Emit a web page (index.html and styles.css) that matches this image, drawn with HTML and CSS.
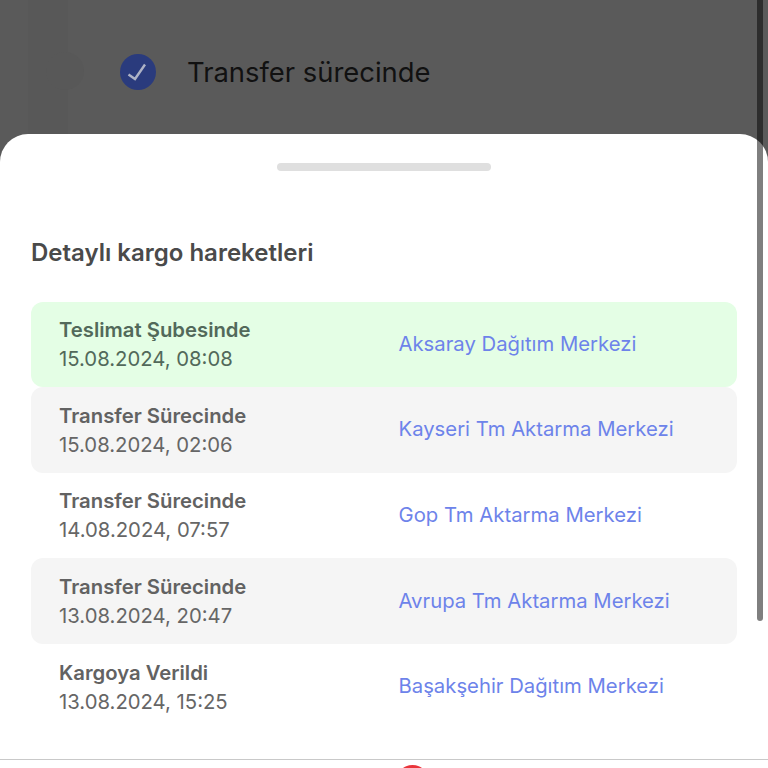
FILE: index.html
```html
<!DOCTYPE html>
<html lang="tr">
<head>
    <meta charset="UTF-8">
    <meta name="viewport" content="width=device-width, initial-scale=1.0">
    <title>Detaylı kargo hareketleri</title>
    <link rel="stylesheet" href="styles.css">
</head>
<body>
    <div class="screen">
        <!-- Karartılmış arka plan -->
        <div class="backdrop">
            <div class="track"></div>
            <div class="track-dot"></div>
            <div class="status-row">
                <svg class="check" width="36" height="36" viewBox="0 0 36 36">
                    <circle cx="18" cy="18" r="18" fill="#2a3b7d"/>
                    <path d="M8.5 20.5l6.5 4.5 10-14.5" fill="none" stroke="#aeb3c6" stroke-width="2.4"/>
                </svg>
                <span class="status-text">Transfer sürecinde</span>
            </div>
        </div>

        <!-- Alt sayfa -->
        <div class="sheet">
            <div class="handle"></div>
            <h2 class="sheet-title">Detaylı kargo hareketleri</h2>
            <div class="moves">
                <div class="move move-current">
                    <div class="move-info">
                        <div class="move-status">Teslimat Şubesinde</div>
                        <div class="move-date">15.08.2024, 08:08</div>
                    </div>
                    <div class="move-place">Aksaray Dağıtım Merkezi</div>
                </div>
                <div class="move move-odd">
                    <div class="move-info">
                        <div class="move-status">Transfer Sürecinde</div>
                        <div class="move-date">15.08.2024, 02:06</div>
                    </div>
                    <div class="move-place">Kayseri Tm Aktarma Merkezi</div>
                </div>
                <div class="move">
                    <div class="move-info">
                        <div class="move-status">Transfer Sürecinde</div>
                        <div class="move-date">14.08.2024, 07:57</div>
                    </div>
                    <div class="move-place">Gop Tm Aktarma Merkezi</div>
                </div>
                <div class="move move-odd">
                    <div class="move-info">
                        <div class="move-status">Transfer Sürecinde</div>
                        <div class="move-date">13.08.2024, 20:47</div>
                    </div>
                    <div class="move-place">Avrupa Tm Aktarma Merkezi</div>
                </div>
                <div class="move">
                    <div class="move-info">
                        <div class="move-status">Kargoya Verildi</div>
                        <div class="move-date">13.08.2024, 15:25</div>
                    </div>
                    <div class="move-place">Başakşehir Dağıtım Merkezi</div>
                </div>
            </div>
        </div>

        <!-- Alt menü, sadece üst kenarı görünüyor -->
        <div class="bottom-bar">
            <div class="red-dot"></div>
        </div>

        <div class="scrollbar"></div>
    </div>
</body>
</html>
```

FILE: styles.css
```css
/* Основные стили */
html, body {
    margin: 0;
    height: 100%;
}
body {
    font-family: Inter, "Noto Sans", sans-serif;
    background-color: #fff;
    overflow: hidden;
}
.screen {
    position: relative;
    height: 768px;
    display: flex;
    flex-direction: column;
    overflow: hidden;
    background-color: #5a5a5a;
}

/* Arka plan */
.backdrop {
    position: relative;
    height: 164px;
    margin-bottom: -30px;
    flex-shrink: 0;
}
.track {
    position: absolute;
    top: 0;
    left: 28px;
    width: 40px;
    height: 140px;
    background-color: #585858;
}
.track-dot {
    position: absolute;
    top: 52px;
    left: 46px;
    width: 38px;
    height: 38px;
    border-radius: 50%;
    background-color: #585858;
}
.status-row {
    position: relative;
    display: flex;
    align-items: center;
    gap: 31px;
    padding: 54px 0 0 120px;
}
.check {
    display: block;
}
.status-text {
    font-size: 27.4px;
    line-height: 36px;
    color: #111;
}

/* Alt sayfa */
.sheet {
    position: relative;
    flex: 1;
    background-color: #fff;
    border-radius: 28px 28px 0 0;
    padding: 29px 31px 0;
}
.handle {
    width: 214px;
    height: 8px;
    margin: 0 auto;
    border-radius: 4px;
    background-color: #dfdfdf;
}
.sheet-title {
    margin: 66px 0 32.5px;
    font-size: 24px;
    line-height: 32px;
    font-weight: 600;
    color: #4a4a4a;
}
.moves {
    display: flex;
    flex-direction: column;
}
.move {
    display: flex;
    align-items: center;
    height: 85.6px;
    padding-left: 28px;
    border-radius: 12px;
}
.move-odd {
    background-color: #f5f5f5;
}
.move-current {
    background-color: #e4fee5;
}
.move-info {
    width: 339.5px;
    flex-shrink: 0;
}
.move-status {
    font-size: 20.3px;
    line-height: 29px;
    font-weight: 600;
    color: #626262;
}
.move-date {
    font-size: 20.3px;
    line-height: 29px;
    color: #666;
}
.move-current .move-status,
.move-current .move-date {
    color: #52695a;
}
.move-place {
    padding-bottom: 2px;
    font-size: 20.3px;
    color: #6d83ea;
}

/* Alt menü */
.bottom-bar {
    position: relative;
    height: 8px;
    flex-shrink: 0;
    background-color: #fff;
    border-top: 1px solid #c9c9c9;
    overflow: hidden;
}
.red-dot {
    position: absolute;
    top: 5px;
    left: 396px;
    width: 33px;
    height: 33px;
    border-radius: 50%;
    background-color: #e9343a;
}

/* Kaydırma çubuğu */
.scrollbar {
    position: absolute;
    top: 0;
    left: 757px;
    width: 6px;
    height: 621px;
    border-radius: 0 0 3px 3px;
    background-color: rgba(0, 0, 0, 0.5);
}
```
